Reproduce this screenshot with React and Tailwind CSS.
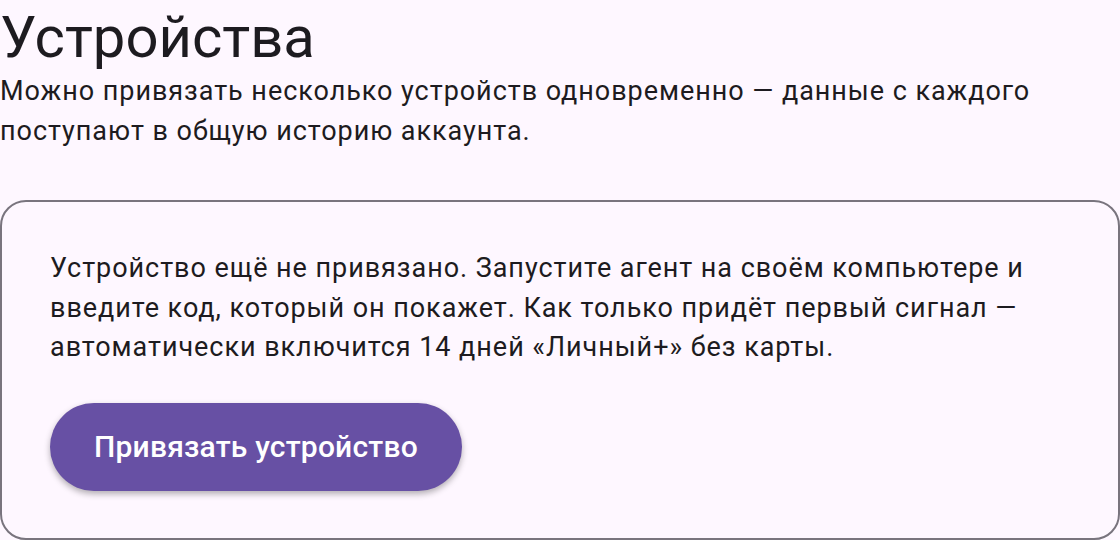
import React from "react";

const Devices = () => {
  return (
    <div className="min-h-screen bg-[#fef7ff] text-[#1d1b20] font-['Roboto',sans-serif] overflow-hidden">
      <h1 className="text-[58px] leading-[70px] font-normal pt-[2px]">
        Устройства
      </h1>
      <p className="text-[27px] leading-[39.5px] tracking-[0.95px]">
        Можно привязать несколько устройств одновременно — данные с каждого
        поступают в общую историю аккаунта.
      </p>

      {/* Empty state card */}
      <div className="mt-[49px] rounded-[26px] border-2 border-[#79747e] pt-[47px] pb-[47px] px-12">
        <p className="text-[27px] leading-[39.5px] tracking-[0.95px]">
          Устройство ещё не привязано. Запустите агент на своём компьютере и
          введите код, который он покажет. Как только придёт первый сигнал —
          автоматически включится 14 дней «Личный+» без карты.
        </p>
        <button className="mt-[35px] h-[88px] px-[44px] rounded-full bg-[#6750a4] text-white text-[30px] font-medium tracking-[0.2px] shadow-[0_3px_6px_rgba(0,0,0,0.3)]">
          Привязать устройство
        </button>
      </div>
    </div>
  );
};

export default function App() {
  return <Devices />;
}
